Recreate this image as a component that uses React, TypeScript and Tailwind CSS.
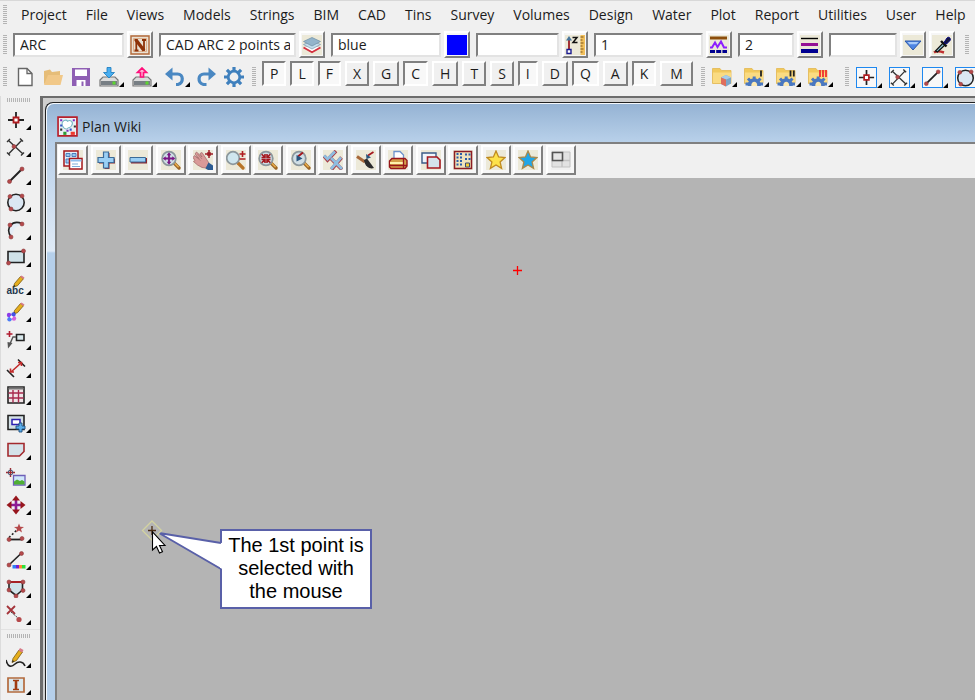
import React from "react";
import clsx from "clsx";

const menus = ["Project", "File", "Views", "Models", "Strings", "BIM", "CAD", "Tins", "Survey", "Volumes", "Design", "Water", "Plot", "Report", "Utilities", "User", "Help"];

const toggles = [
     { key: "P", on: true },
     { key: "L", on: true },
     { key: "F", on: true },
     { key: "X", on: false },
     { key: "G", on: false },
     { key: "C", on: true },
     { key: "H", on: false },
     { key: "T", on: false },
     { key: "S", on: false },
     { key: "I", on: true },
     { key: "D", on: false },
     { key: "Q", on: true },
     { key: "A", on: false },
     { key: "K", on: true },
     { key: "M", on: false },
];

const fields = [
     { name: "Name", value: "ARC", icon: "name", width: "w-[111px]" },
     { name: "Model", value: "CAD ARC 2 points and radius", icon: "layers", width: "w-[137px]" },
     { name: "Colour", value: "blue", icon: "colour", width: "w-[110px]" },
     { name: "Height", value: "", icon: "height", width: "w-[83px]" },
     { name: "Linestyle", value: "1", icon: "linestyle", width: "w-[109px]" },
     { name: "Weight", value: "2", icon: "weight", width: "w-[56px]" },
     { name: "Tinable", value: "", icon: "down", width: "w-[68px]" },
];

const drawTools = ["point", "intersect", "line", "circle", "arc", "rect", "text", "paint", "leader", "dimension", "grid", "insert", "shape", "image", "move", "angle", "colourLine", "polygon", "remove"];

const viewTools = ["windows", "plus", "minus", "fit", "pan", "zoom", "shrink", "previous", "checks", "brush", "print", "copy", "keypad", "star", "starBlue", "layout"];

function Dot({ x, y }: { x: number; y: number }) {
     return <circle cx={x} cy={y} r="2" fill="#b5494b" stroke="#8c3a3c" strokeWidth="0.6" />;
}

function Lens() {
     return (
          <>
               <path d="M13 13L18 18" stroke="#9a6424" strokeWidth="3.2" strokeLinecap="round" />
               <path d="M13.5 13L17.6 17.2" stroke="#eab04c" strokeWidth="1.4" />
               <circle cx="8" cy="8.5" r="6.8" fill="#d0dfe6" stroke="#8b979c" strokeWidth="1.8" />
          </>
     );
}

function Folder() {
     return (
          <>
               <path d="M.5 1.5H8l1.5 2H19v13H.5z" fill="#f1c95c" stroke="#e3b850" strokeWidth="0.8" />
               <path d="M1 5.5h18V16H1z" fill="#fadb82" />
          </>
     );
}

function Cog() {
     return (
          <>
               <path d="M5.5 19c-.5-8 10-8 9.5 0" fill="#fbe9b4" stroke="#4a78c0" strokeWidth="3.6" />
               <path d="M10.2 9.5v4M1.5 17h5M14 17h5M4 11.5l3 3M16.5 11.5l-3 3" stroke="#4a78c0" strokeWidth="3" />
          </>
     );
}

const plusPath = "M7.5 2h5v5.5H18v5h-5.5V18h-5v-5.5H2v-5h5.5z";
const starPath = "M10 1l2.6 6 6.4.6-4.9 4.3 1.5 6.4L10 15l-5.6 3.3 1.5-6.4L1 7.6 7.4 7z";

const pencil = (
     <>
          <path d="M7.5 12l1-3.5 6-7 3 2.2-6 7z" fill="#e6ae1d" stroke="#7a5a10" strokeWidth="0.8" />
          <path d="M14.2 1.8L15.5.5l3 2.1-1.2 1.5z" fill="#d77b88" />
          <path d="M7.5 12l.6-2 1.3 1z" fill="#222" />
     </>
);

const icons: Record<string, React.ReactNode> = {
     name: (
          <>
               <path d="M1 1h18v18H1z" fill="#e9e1d3" stroke="#b36a3c" strokeWidth="1.4" />
               <path d="M3.5 3.5h13v13h-13z" fill="none" stroke="#d9a27a" strokeWidth="0.8" />
               <path d="M4.5 5h3M12 5h4M4.5 15.5h4M6.3 5v10.5M14 5v11" stroke="#8e3208" strokeWidth="1.8" />
               <path d="M6 5l8 10.5" stroke="#8e3208" strokeWidth="3.4" />
          </>
     ),
     layers: (
          <>
               <path d="M2 12.5l8-3 8 3-8 4.5z" fill="#fff" stroke="#c9a4a8" strokeWidth="0.6" />
               <path d="M1.5 12.5l8.5 4.8 8.5-4.8" fill="none" stroke="#d43240" strokeWidth="1.8" />
               <path d="M1.5 9.5L10 6l8.5 3.5L10 14z" fill="#c3ddec" stroke="#7898ad" strokeWidth="0.7" />
               <path d="M1.5 6.5L10 2.5l8.5 4L10 11z" fill="#93b4cb" stroke="#6d8ca3" strokeWidth="0.7" />
          </>
     ),
     colour: <path d="M0 0h20v20H0z" fill="#0000ff" />,
     height: (
          <>
               <path d="M4 4v11" stroke="#9c1c24" strokeWidth="1.8" />
               <path d="M1 5.5L4 1l3 4.5z" fill="#49769c" />
               <path d="M2 14.5h4v4H2z" fill="#fff" stroke="#1c1c90" strokeWidth="1.4" />
               <path d="M7.5 2.5h4.5L8 7.5h4.5" fill="none" stroke="#111" strokeWidth="1.5" />
               <path d="M15.5 0H20v20h-4.5z" fill="#f2c05c" />
               <path d="M15.5 2h3M15.5 5h2M15.5 8h3M15.5 11h2M15.5 14h3M15.5 17h2" stroke="#7c5518" />
          </>
     ),
     linestyle: (
          <>
               <path d="M1 3h17" stroke="#8c4e0c" strokeWidth="3" />
               <path d="M1 12.5h2l3-5 2.5 4.5L12 6.5l3 6h3" fill="none" stroke="#8d20ff" strokeWidth="2" />
               <path d="M1 16.5h17" stroke="#000090" strokeWidth="3" strokeDasharray="5 1.2" />
          </>
     ),
     weight: (
          <>
               <path d="M1 3.5h17" stroke="#000" strokeWidth="1.4" />
               <path d="M1 9.5h17" stroke="#941294" strokeWidth="3" />
               <path d="M1 16h17" stroke="#000090" strokeWidth="4" />
          </>
     ),
     down: (
          <>
               <path d="M2 6h16l-8 9z" fill="#4f86e4" stroke="#2f58a8" />
               <path d="M4.5 7h11l-2 2.3h-7z" fill="#a8cbfa" />
          </>
     ),
     picker: (
          <>
               <path d="M2 17.5c3-2 7-1 10 0" stroke="#c03030" strokeWidth="2.4" fill="none" />
               <path d="M3.5 16l7.5-8 2 2-7.5 7z" fill="#8fc5d6" stroke="#111" strokeWidth="1.2" />
               <path d="M9 6l5.5 5.5" stroke="#111" strokeWidth="2.4" />
               <path d="M12 7.5l3-4.5c1.5-2 4.5.5 3 2.5L14.5 9z" fill="#14143c" stroke="#000080" />
          </>
     ),
     newFile: (
          <>
               <path d="M3.5 1.5H12l5 5v12H3.5z" fill="#fff" stroke="#666" strokeWidth="1.4" />
               <path d="M12 1.5v5h5" fill="none" stroke="#666" strokeWidth="1.3" />
          </>
     ),
     open: (
          <>
               <path d="M1 17V4l6-1.5L9 5l8-1v5" fill="#e6bd78" />
               <path d="M1 18L5 8h15l-2.5 10z" fill="#f1c888" />
          </>
     ),
     save: (
          <>
               <path d="M1 1h18v18H1z" fill="#8f5fb4" />
               <path d="M4 2.5h12v6.5H4zM5.5 13h9v6h-9z" fill="#fff" />
               <path d="M10.5 14.5h2V19h-2z" fill="#8f5fb4" />
          </>
     ),
     importDisk: (
          <>
               <path d="M1 13l3-3h12l3 3v6H1z" fill="#dcdcdc" stroke="#777" strokeWidth="1.2" />
               <path d="M2 14h16v4H2z" fill="#777e84" />
               <path d="M13.5 14.5h3v3h-3z" fill="#5bd72f" />
               <path d="M8 .5h4v5h3.5L10 11 4.5 5.5H8z" fill="#49aef0" stroke="#1678bd" strokeWidth="0.8" />
          </>
     ),
     exportDisk: (
          <>
               <path d="M1 13l3-3h12l3 3v6H1z" fill="#dcdcdc" stroke="#777" strokeWidth="1.2" />
               <path d="M2 14h16v4H2z" fill="#777e84" />
               <path d="M13.5 14.5h3v3h-3z" fill="#5bd72f" />
               <path d="M8.5 10V5.5h-3L10 1l4.5 4.5h-3V10z" fill="#ffb6d5" stroke="#ff0f7b" strokeWidth="1.7" />
          </>
     ),
     undo: (
          <>
               <path d="M0 7L7.5.5v13z" fill="#4a88c2" />
               <path d="M5 7h7.5c6 0 6.5 9 .5 10.5h-2" fill="none" stroke="#4a88c2" strokeWidth="3.2" />
          </>
     ),
     redo: (
          <>
               <path d="M20 7L12.5.5v13z" fill="#4a88c2" />
               <path d="M15 7H8c-6 0-7 8.5-.5 10.5h3" fill="none" stroke="#4a88c2" strokeWidth="3.2" />
          </>
     ),
     gear: (
          <>
               <circle cx="10" cy="10" r="5.8" fill="none" stroke="#3f80bd" strokeWidth="2.8" />
               <path d="M10 0v4M10 16v4M0 10h4M16 10h4M2.9 2.9l2.8 2.8M14.3 14.3l2.8 2.8M2.9 17.1l2.8-2.8M14.3 5.7l2.8-2.8" stroke="#3f80bd" strokeWidth="3.2" />
          </>
     ),
     folderCube: (
          <>
               <Folder />
               <path d="M9 10.5L14 8l5 2.5v6l-5 3L9 17z" fill="#7ca6c8" />
               <path d="M9 10.5l5 2 5-2L14 8z" fill="#a7cde8" />
               <path d="M9 10.5l5 2v7L9 17z" fill="#df6e5c" />
          </>
     ),
     folderOne: (
          <>
               <Folder />
               <Cog />
               <path d="M17 3.5v6" stroke="#222" strokeWidth="1.8" />
          </>
     ),
     folderTwo: (
          <>
               <Folder />
               <Cog />
               <path d="M14.5 3.5v6M17.8 3.5v6" stroke="#222" strokeWidth="1.8" />
          </>
     ),
     folderThree: (
          <>
               <Folder />
               <Cog />
               <path d="M12 3v7M15 3v7M18 3v7" stroke="#f03030" strokeWidth="1.8" />
          </>
     ),
     point: (
          <>
               <path d="M10 2v16M2 10h16" stroke="#222" strokeWidth="1.8" />
               <path d="M7.5 7.5h5v5h-5z" fill="#fff" stroke="#b01c20" strokeWidth="1.8" />
          </>
     ),
     intersect: (
          <>
               <path d="M2.5 3.5L17 17M16 3L2.5 17M1 5l3-3M15 18.5l3-3M14 1.5l3 3M1 15.5l3 3" stroke="#333" strokeWidth="1.4" />
               <Dot x={8} y={9.5} />
          </>
     ),
     line: (
          <>
               <path d="M4 16L16 4" stroke="#222" strokeWidth="1.9" />
               <Dot x={3.5} y={16.5} />
               <Dot x={16} y={4} />
          </>
     ),
     circle: (
          <>
               <circle cx="10" cy="10.5" r="8.2" fill="#dbe7f3" stroke="#222" strokeWidth="1.6" />
               <Dot x={4} y={4.5} />
               <Dot x={16} y={4} />
               <Dot x={5} y={17} />
          </>
     ),
     arc: (
          <>
               <path d="M5 17C-1 8 7-.5 16 4L9 8z" fill="#e4edf6" />
               <path d="M5 17C-1 8 6-.5 16 3.5" fill="none" stroke="#222" strokeWidth="1.6" />
               <Dot x={4} y={5} />
               <Dot x={16} y={4} />
               <Dot x={5} y={17} />
          </>
     ),
     rect: (
          <>
               <path d="M2 4.5h16v11H2z" fill="#cfe2e8" stroke="#222" strokeWidth="1.6" />
               <Dot x={17.5} y={4} />
               <Dot x={2.5} y={16} />
          </>
     ),
     text: (
          <>
               {pencil}
               <text x="0.5" y="19" fontSize="10" fontWeight="700" fill="#24384e" fontFamily="Liberation Sans, sans-serif">
                    abc
               </text>
          </>
     ),
     paint: (
          <>
               {pencil}
               <circle cx="3" cy="13" r="2.2" fill="#8d3ce8" />
               <circle cx="7.5" cy="12.5" r="2.2" fill="#4453e6" />
               <circle cx="3.5" cy="17.2" r="2.2" fill="#4c7df5" />
               <circle cx="8" cy="16.5" r="2.2" fill="#d463dd" />
               <circle cx="5.5" cy="15" r="1.3" fill="#fff" />
          </>
     ),
     leader: (
          <>
               <path d="M3.5 1v6M.5 4h6" stroke="#b01c30" strokeWidth="1.6" />
               <path d="M10.5 4.5H18v6h-7.5z" fill="#d8e8ec" stroke="#222" strokeWidth="1.6" />
               <path d="M10 7H7l-4 9" fill="none" stroke="#555" strokeWidth="1.4" />
               <path d="M1.5 12l5 1L2 18.5z" fill="#555" />
          </>
     ),
     dimension: (
          <>
               <path d="M1 12l7 7M12 1.5l7 7" stroke="#222" strokeWidth="1.6" />
               <path d="M5 14L15 5M4.5 10.5V14H8M12 4.5h3.5V8" fill="none" stroke="#c22b2b" strokeWidth="1.6" />
          </>
     ),
     grid: (
          <>
               <path d="M2 2h16v16H2z" fill="#efe3e6" stroke="#222" strokeWidth="1.6" />
               <path d="M2.5 3.5h15" stroke="#777" strokeWidth="2" />
               <path d="M2.5 8h15M2.5 13h15M7 5v12.5M12.5 5v12.5" stroke="#a8284c" strokeWidth="1.4" />
          </>
     ),
     insert: (
          <>
               <path d="M2 2.5h16v14H2z" fill="#d3e0e4" stroke="#222" strokeWidth="1.6" />
               <path d="M6 6.5h8v5H6z" fill="#fff" stroke="#2b1fb0" strokeWidth="1.5" />
               <path d="M13 10h3v3h3v3h-3v3h-3v-3h-3v-3h3z" fill="#5aaeea" stroke="#1d4f80" strokeWidth="0.9" />
          </>
     ),
     shape: <path d="M2 3.5h16v8L13.5 16H2z" fill="#d5e3ea" stroke="#a32a2e" strokeWidth="1.6" />,
     image: (
          <>
               <path d="M4.5 0v9M0 4.5h9" stroke="#a32a2e" strokeWidth="1.4" />
               <circle cx="4.5" cy="4.5" r="2.4" fill="none" stroke="#425a7d" />
               <path d="M7.5 7.5H19V17H7.5z" fill="#cfe7fb" stroke="#6e5fb8" strokeWidth="1.3" />
               <path d="M8 16.5v-3l3-2 3 1.5 2-1 2.5 1.5v3z" fill="#4fae34" />
          </>
     ),
     move: (
          <>
               <path d="M10 4v12M4 10h12" stroke="#8d1b93" strokeWidth="2.6" />
               <path d="M6 5.5L10 .5l4 5zM6 14.5l4 5 4-5zM5.5 6L.5 10l5 4zM14.5 6l5 4-5 4z" fill="#97161d" />
          </>
     ),
     angle: (
          <>
               <path d="M3 16.5h13" stroke="#222" strokeWidth="1.8" />
               <path d="M3 14.5L12 6" stroke="#222" strokeWidth="1.6" strokeDasharray="2 2" />
               <path d="M13 .5l1.3 3.2 3.7.3-3 2 1 3.5-3-2-3 2 1-3.5-3-2 3.7-.3z" fill="#b5494b" />
               <Dot x={3} y={16.5} />
               <Dot x={16} y={15.5} />
          </>
     ),
     colourLine: (
          <>
               <path d="M4 14L15 3.5" stroke="#222" strokeWidth="1.6" />
               <Dot x={3} y={15} />
               <Dot x={15.5} y={3.5} />
               <path d="M6.5 15H10v3.5H6.5z" fill="#2f7ef7" />
               <path d="M10 15h3v3.5h-3z" fill="#7a1fd0" />
               <path d="M13 15h3v3.5h-3z" fill="#ff8a2b" />
               <path d="M16 15h3.5v3.5H16z" fill="#2fe03a" />
          </>
     ),
     polygon: (
          <>
               <path d="M3 4v8l7 5.5 6.5-5.5V4z" fill="#cfe2e8" stroke="#222" strokeWidth="1.6" />
               <path d="M2 4h16" stroke="#b01c20" strokeWidth="1.8" />
               <Dot x={3} y={4} />
               <Dot x={17} y={4} />
               <Dot x={3} y={12} />
               <Dot x={17} y={12.5} />
               <Dot x={10} y={18} />
          </>
     ),
     remove: (
          <>
               <path d="M1 1l8 8M9 1L1 9" stroke="#a4343a" strokeWidth="1.8" />
               <path d="M5 7l7 6" stroke="#444" strokeDasharray="2 1" />
               <circle cx="13" cy="14.5" r="2.6" fill="#b5494b" />
          </>
     ),
     sketch: (
          <>
               <path d="M0 12c2 8 6 7 9 4s8-3 10 2" fill="none" stroke="#222" strokeWidth="1.6" />
               <path d="M6 14.5l1-4L13 2l3.5 2-6 8.5z" fill="#e6ae1d" stroke="#7a5a10" strokeWidth="0.8" />
               <path d="M12.5 2.5L14 0l3.5 2-1.3 2.5z" fill="#d77b88" />
               <path d="M6 14.5l.8-2.3 1.5 1z" fill="#222" />
          </>
     ),
     frameText: (
          <>
               <path d="M2 3h16v14H2z" fill="#dbe9ee" stroke="#b36a3c" strokeWidth="1.7" />
               <path d="M7 5.5h6M7 14.5h6" stroke="#a03c10" strokeWidth="1.3" />
               <path d="M10 5.5v9" stroke="#a03c10" strokeWidth="2.6" />
          </>
     ),
     windows: (
          <>
               <path d="M1 1h14v15H1z" fill="#e2f0fa" stroke="#a5181e" strokeWidth="1.5" />
               <path d="M3 3.5h4v3H3zM9 3.5h4v3H9zM3 9h4v4H3z" fill="#9cc6ee" stroke="#3e76b8" strokeWidth="0.9" />
               <path d="M6.5 8.5H19V19H6.5z" fill="#fff" stroke="#a5181e" strokeWidth="1.5" />
               <path d="M7.5 9.5h11v2h-11z" fill="#8fc0ee" />
               <path d="M9 14h6M9 16.5h8" stroke="#7cadd8" />
          </>
     ),
     plus: (
          <>
               <path d={plusPath} fill="#8a2630" transform="translate(1 1)" />
               <path d={plusPath} fill="#9bd0f5" stroke="#3d6c98" strokeWidth="1.2" />
          </>
     ),
     minus: (
          <>
               <path d="M3 8h16v5.5H3z" fill="#8a2630" />
               <path d="M2 7.5h15.5V12H2z" fill="#9bd0f5" stroke="#3d6c98" />
          </>
     ),
     fit: (
          <>
               <Lens />
               <path d="M8 4.5v8M4 8.5h8" stroke="#7a1684" strokeWidth="1.8" />
               <path d="M5.7 5.2L8 2.3l2.3 2.9zM5.7 11.8L8 14.7l2.3-2.9zM4.7 6.2L1.8 8.5l2.9 2.3zM11.3 6.2l2.9 2.3-2.9 2.3z" fill="#7a1684" />
          </>
     ),
     pan: (
          <>
               <path d="M0 7.5l1.5-2L6 8.5 2 4l1.5-2L9 7 7 3.5l2-1 5 7.5 2 3-3 5-4-.5L4.5 15 .5 11.5l1.5-1z" fill="#d99a98" stroke="#9d6466" strokeWidth="0.7" />
               <path d="M2.5 6.5l5 4M4.5 4L9 9" stroke="#a8706f" strokeWidth="0.7" />
               <path d="M12.5 18.5l3-6 4.5 3V20h-5z" fill="#2c5b92" />
               <path d="M16 0v8M12 4h8" stroke="#9c1c24" strokeWidth="1.5" />
               <path d="M14.2 2.2h3.6v3.6h-3.6z" fill="#9c1c24" />
          </>
     ),
     zoom: (
          <>
               <path d="M12 13l5 5" stroke="#b87428" strokeWidth="3.2" strokeLinecap="round" />
               <circle cx="7" cy="8" r="6.3" fill="#cfe6ee" stroke="#8b979c" strokeWidth="1.7" />
               <path d="M16.5 1v6M13.5 4h6M13.5 9h6" stroke="#b01c20" strokeWidth="1.6" />
          </>
     ),
     shrink: (
          <>
               <Lens />
               <path d="M3.7 4.2L7 7.5M12.3 4.2L9 7.5M3.7 12.8L7 9.5M12.3 12.8L9 9.5M7 4v3.5H3.5M9 4v3.5h3.5M7 13V9.5H3.5M9 13V9.5h3.5" fill="none" stroke="#a5181e" strokeWidth="1.6" />
          </>
     ),
     previous: (
          <>
               <Lens />
               <path d="M7 6.5L12 2.5" stroke="#a5181e" strokeWidth="2" />
               <path d="M5.5 11.5V5l6 3.5z" fill="#28557e" />
          </>
     ),
     checks: (
          <>
               <path d="M1 6l3.5 4L13 1" fill="none" stroke="#a83a44" strokeWidth="3.6" />
               <path d="M1 5.5L4.5 9 12 1.5" fill="none" stroke="#8ebde0" strokeWidth="2.8" />
               <path d="M8 8.5l11 11M18.5 7.5l-10 12" stroke="#a83a44" strokeWidth="3.6" />
               <path d="M8 8l11 11M18 7.5L8 19" stroke="#8ebde0" strokeWidth="2.8" />
          </>
     ),
     brush: (
          <>
               <path d="M1 6.5L9 12" stroke="#a8683a" strokeWidth="3" />
               <path d="M8 10l3-1.5 7 9.5c-4 1.5-9-1-10-8z" fill="#2c2c2c" />
               <path d="M12 5.5L17.5 2" stroke="#a5181e" strokeWidth="1.8" />
               <path d="M10 4l.5 5L15 7.5z" fill="#28557e" />
          </>
     ),
     print: (
          <>
               <path d="M6 9V1.5h6L15.5 5v4z" fill="#fff" stroke="#6c93cc" strokeWidth="1.3" />
               <path d="M1.5 11L4 8.5h13l2 2V16l-2 2.5H3L1.5 17z" fill="#d4a04a" stroke="#98161c" strokeWidth="1.4" />
               <path d="M2 12h13v2H2z" fill="#fff3ad" />
               <path d="M2 15.5h17M15.5 9v9" stroke="#98161c" strokeWidth="1.3" />
          </>
     ),
     copy: (
          <>
               <path d="M1 3h14v10H1z" fill="#eef5fa" stroke="#3b5c88" strokeWidth="1.4" />
               <path d="M6.5 7H16l3 3v8H6.5z" fill="#d5e3ea" stroke="#a5181e" strokeWidth="1.6" />
          </>
     ),
     keypad: (
          <>
               <path d="M1.5 1.5h17v17h-17z" fill="#f0e3bd" stroke="#8c1c24" strokeWidth="1.5" />
               <path d="M4.5 3v13M8 3v13" stroke="#2b5da8" strokeWidth="2" strokeDasharray="2 1.5" />
               <path d="M12 3.5h2v2h-2zM15.5 3.5h2v2h-2zM12 8h2v2h-2zM15.5 8h2v2h-2z" fill="#2b5da8" />
               <path d="M12.5 13h4v4h-4z" fill="#f5cf33" stroke="#3b4c78" />
          </>
     ),
     star: <path d={starPath} fill="#fde24b" stroke="#c08a20" strokeWidth="1.3" />,
     starBlue: <path d={starPath} fill="#20a6e8" stroke="#a9884a" strokeWidth="1.3" />,
     layout: (
          <>
               <path d="M0 0h20v20H0z" fill="#f0f0f0" />
               <path d="M1 2h18v15H1z" fill="#e2e2e2" stroke="#c2c2c2" />
               <path d="M11 2v15M1 10.5h18" stroke="#c2c2c2" strokeWidth="1.4" />
               <path d="M1.5 2.5h10v8h-10z" fill="#e6e6e6" stroke="#555" strokeWidth="1.6" />
          </>
     ),
     logo: (
          <>
               <path d="M1 1h18v18H1z" fill="#e9f0f4" stroke="#b8202c" strokeWidth="1.6" />
               <path d="M5 9c-1-5 4-6 5-4 3-2 6 1 4 4-1 3-3 1-4 3-2 1-4-1-5-3z" fill="#fff" stroke="#78b6c4" />
               <path d="M3 3h2v2H3zM15 3h2v2h-2zM9 13h2v2H9z" fill="#7b2bc0" />
               <path d="M3 8h2v2H3zM12 12h2v2h-2z" fill="#3555c8" />
               <path d="M6 15h3v3H6z" fill="#2f9a35" />
               <path d="M13 15h4v3h-4z" fill="#f0392e" />
               <path d="M3 12h2v2H3zM16 9h2v2h-2z" fill="#333" />
          </>
     ),
};

function Icon({ name, className = "size-5" }: { name: string; className?: string }) {
     return (
          <svg viewBox="0 0 20 20" className={clsx("shrink-0", className)} aria-hidden="true">
               {icons[name]}
          </svg>
     );
}

function Grip() {
     return <span className="h-5 w-1 shrink-0 bg-[repeating-linear-gradient(to_bottom,#b4b4b4_0_1px,#f0f0f0_1px_2px)]" />;
}

function SideGrip() {
     return <span className="ml-1.5 block h-1 w-6 shrink-0 bg-[repeating-linear-gradient(to_right,#b4b4b4_0_1px,#f0f0f0_1px_2px)]" />;
}

// Flat button, the black corner marks the ones that open a fly-out
function ToolButton({ name, flyout = false, framed = false }: { name: string; flyout?: boolean; framed?: boolean }) {
     return (
          <button type="button" aria-label={name} className="flex shrink-0 items-end">
               <span className={clsx("flex", framed && "border border-[#1e88f0] bg-[#f8f8f8]")}>
                    <Icon name={name} className={framed ? "size-[19px]" : "size-5"} />
               </span>
               {flyout && (
                    <svg viewBox="0 0 5 5" className="size-[5px]" aria-hidden="true">
                         <path d="M5 0v5H0z" fill="#000" />
                    </svg>
               )}
          </button>
     );
}

function RaisedButton({ name, className }: { name: string; className: string }) {
     return (
          <button type="button" aria-label={name} className={clsx("flex shrink-0 items-center justify-center border-2 border-t-white border-l-white border-r-[#808080] border-b-[#808080] bg-[#f6f6f6]", className)}>
               <Icon name={name} className="size-5 bg-[#ece9d8]" />
          </button>
     );
}

function MenuBar() {
     return (
          <nav className="flex h-7 items-center border-t border-[#d8d8d8] pl-[3px]">
               <Grip />
               <div className="flex gap-[19px] pl-3.5">
                    {menus.map((menu) => (
                         <button type="button" key={menu}>
                              {menu}
                         </button>
                    ))}
               </div>
          </nav>
     );
}

function FieldBar() {
     return (
          <div className="flex h-[33px] items-center gap-1.5 pl-[3px]">
               <Grip />
               {fields.map((field) => (
                    <div key={field.name} className="flex shrink-0 items-center gap-[3px]">
                         <input
                              aria-label={field.name}
                              defaultValue={field.value}
                              className={clsx("h-6 border-2 border-t-[#808080] border-l-[#808080] border-r-[#e3e3e3] border-b-[#e3e3e3] bg-white pr-1 pl-[5px] outline-none", field.width)}
                         />
                         <RaisedButton name={field.icon} className="h-[27px] w-[26px]" />
                    </div>
               ))}
               <RaisedButton name="picker" className="-ml-[3px] h-[27px] w-[26px]" />
               <span className="flex gap-1.5 pl-1">
                    <Grip />
                    <span className="w-6 border-l-2 border-[#808080] bg-white" />
               </span>
          </div>
     );
}

function IconBar() {
     return (
          <div className="flex h-[35px] items-center pb-[3px] pl-[3px]">
               <Grip />
               <div className="flex items-center gap-2 pl-2">
                    <ToolButton name="newFile" />
                    <ToolButton name="open" />
                    <ToolButton name="save" />
                    <ToolButton name="importDisk" flyout />
                    <ToolButton name="exportDisk" flyout />
                    <ToolButton name="undo" flyout />
               </div>
               <div className="flex items-center gap-2 pl-1.5">
                    <ToolButton name="redo" />
                    <ToolButton name="gear" />
                    <Grip />
               </div>
               <div className="flex gap-1 self-start pl-1.5">
                    {toggles.map((toggle) => (
                         <button
                              type="button"
                              key={toggle.key}
                              aria-pressed={toggle.on}
                              className={clsx(
                                   "h-[25px] border-2 leading-5",
                                   toggle.key === "M" ? "px-2" : "px-1.5",
                                   toggle.on ? "border-t-[#808080] border-l-[#808080] border-r-white border-b-white bg-[#f8f8f8]" : "border-t-white border-l-white border-r-[#808080] border-b-[#808080] bg-[#f0f0f0]"
                              )}
                         >
                              {toggle.key}
                         </button>
                    ))}
               </div>
               <div className="flex items-center gap-[7px] pl-2">
                    <Grip />
                    <ToolButton name="folderCube" flyout />
                    <ToolButton name="folderOne" flyout />
                    <ToolButton name="folderTwo" flyout />
                    <ToolButton name="folderThree" flyout />
               </div>
               <div className="flex items-center gap-[7px] pl-3">
                    <Grip />
                    <ToolButton name="point" flyout framed />
                    <ToolButton name="intersect" flyout framed />
                    <ToolButton name="line" flyout framed />
                    <ToolButton name="circle" flyout framed />
               </div>
          </div>
     );
}

function SideBar() {
     return (
          <aside className="flex w-10 shrink-0 flex-col border-l border-[#dcdcdc] pt-0.5">
               <SideGrip />
               <div className="mt-1 flex h-[523px] shrink-0 flex-col">
                    {drawTools.map((tool) => (
                         <div key={tool} className="flex flex-1 items-center pl-[5px]">
                              <ToolButton name={tool} flyout />
                         </div>
                    ))}
               </div>
               <div className="border-t border-[#e2e2e2] pt-1">
                    <SideGrip />
                    <div className="flex flex-col gap-[7px] pt-2.5 pl-[5px]">
                         <ToolButton name="sketch" flyout />
                         <ToolButton name="frameText" flyout />
                    </div>
               </div>
          </aside>
     );
}

function Callout() {
     return (
          <div className="absolute top-[351px] left-[163px] h-20 w-[152px] border-2 border-[#5960a8] bg-white">
               <svg viewBox="0 0 66 48" className="absolute top-0 -left-[64px] h-12 w-[66px]" aria-hidden="true">
                    <path d="M64 12L1 2l63 36z" fill="#fff" />
                    <path d="M63 12L1 2l62 36" fill="none" stroke="#5960a8" strokeWidth="2" />
                    <path d="M62 13h4v24h-4z" fill="#fff" />
               </svg>
               <p className="relative pt-[3px] text-center font-['Liberation_Sans',Arial,sans-serif] text-[20px] leading-[23px] text-black">
                    The 1st point is
                    <br />
                    selected with
                    <br />
                    the mouse
               </p>
          </div>
     );
}

function PlanCanvas() {
     return (
          <div className="relative flex-1 overflow-hidden bg-[#b4b4b4]">
               <svg viewBox="0 0 9 9" className="absolute top-[88px] left-[456px] size-[9px]" aria-hidden="true">
                    <path d="M4.5 0v9M0 4.5h9" stroke="#ff0000" strokeWidth="1.3" />
               </svg>
               <Callout />
               <svg viewBox="0 0 30 36" className="absolute top-[342px] left-[84px] h-9 w-[30px]" aria-hidden="true">
                    <path d="M11 1l9.5 9.5L11 20l-9.5-9.5z" fill="none" stroke="#d3d3a0" strokeWidth="1.3" />
                    <path d="M11 6v9M7 10.5h8" stroke="#4a2b10" strokeWidth="1.3" />
                    <path d="M11.5 12v18l4-3.5 3 6.5 3-1.3-3-6.2H24z" fill="#fff" stroke="#000" strokeWidth="1.1" />
               </svg>
          </div>
     );
}

function PlanWindow() {
     return (
          <section className="flex flex-1 flex-col rounded-tl-lg border-t border-l border-[#222] bg-[linear-gradient(to_bottom,#94b2d3_0,#b9d1ea_40px,#c0d5ec_60px,#dfeaf6_148px,#b5cfea_150px)] shadow-[inset_1px_1px_0_#f4f8fc]">
               <header className="flex h-[39px] items-center gap-1 pt-2 pl-[11px]">
                    <Icon name="logo" className="size-[21px]" />
                    <h1>Plan Wiki</h1>
               </header>
               <div className="ml-[9px] flex flex-1 flex-col border-t-2 border-l-2 border-[#808080]">
                    <div className="h-[34px] bg-[#f0f0f0] pt-px pl-px">
                         <div className="grid w-[520px] grid-cols-16">
                              {viewTools.map((tool) => (
                                   <RaisedButton key={tool} name={tool} className="h-[30px] w-[30px]" />
                              ))}
                         </div>
                    </div>
                    <PlanCanvas />
               </div>
          </section>
     );
}

export default function App() {
     return (
          <div className="flex h-screen flex-col overflow-hidden bg-[#f0f0f0] font-['Open_Sans','Noto_Sans',sans-serif] text-[14px] leading-5 text-[#1c1c1c]">
               <MenuBar />
               <FieldBar />
               <IconBar />
               <div className="flex min-h-0 flex-1">
                    <SideBar />
                    <main className="flex min-w-0 flex-1 border-t-2 border-l-[3px] border-[#6c6c6c] bg-[#cfcfcf] pt-1 pl-0.5">
                         <PlanWindow />
                    </main>
               </div>
          </div>
     );
}
